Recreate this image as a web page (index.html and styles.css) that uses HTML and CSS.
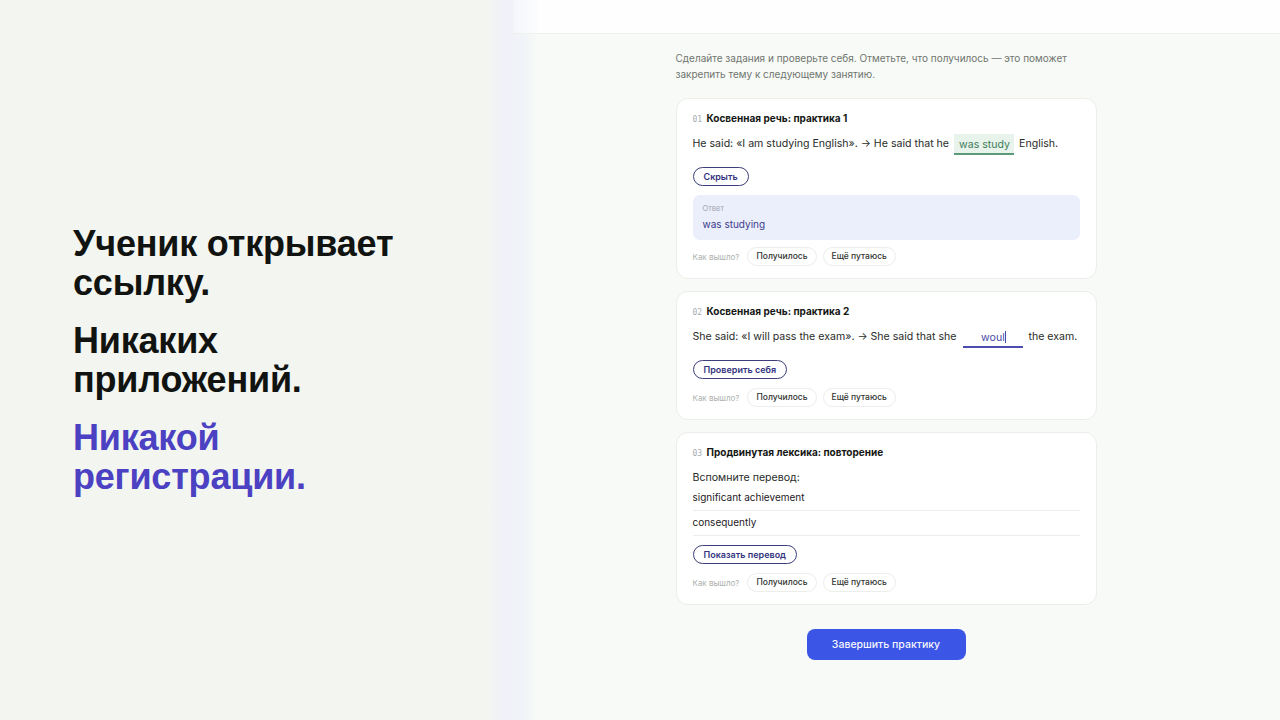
FILE: index.html
```html
<!DOCTYPE html>
<html lang="ru">
<head>
    <meta charset="UTF-8">
    <meta name="viewport" content="width=device-width, initial-scale=1.0">
    <title>Практика по ссылке</title>
    <link rel="stylesheet" href="styles.css">
</head>
<body>
    <div class="stage">
        <section class="pitch">
            <p class="pitch-line">Ученик открывает ссылку.</p>
            <p class="pitch-line">Никаких приложений.</p>
            <p class="pitch-line accent">Никакой регистрации.</p>
        </section>

        <section class="preview">
            <div class="topbar"></div>

            <div class="column">
                <p class="intro">Сделайте задания и проверьте себя. Отметьте, что получилось — это поможет закрепить тему к следующему занятию.</p>

                <div class="card">
                    <div class="card-title"><span class="num">01</span> Косвенная речь: практика 1</div>
                    <div class="sentence">
                        He said: «I am studying English». → He said that he
                        <span class="blank correct">was study</span>
                        English.
                    </div>
                    <button class="pill-btn">Скрыть</button>
                    <div class="answer">
                        <div class="answer-label">Ответ</div>
                        <div class="answer-text">was studying</div>
                    </div>
                    <div class="feedback">
                        <span class="feedback-q">Как вышло?</span>
                        <button class="chip">Получилось</button>
                        <button class="chip">Ещё путаюсь</button>
                    </div>
                </div>

                <div class="card">
                    <div class="card-title"><span class="num">02</span> Косвенная речь: практика 2</div>
                    <div class="sentence">
                        She said: «I will pass the exam». → She said that she
                        <span class="blank typing">woul<span class="caret"></span></span>
                        the exam.
                    </div>
                    <button class="pill-btn">Проверить себя</button>
                    <div class="feedback">
                        <span class="feedback-q">Как вышло?</span>
                        <button class="chip">Получилось</button>
                        <button class="chip">Ещё путаюсь</button>
                    </div>
                </div>

                <div class="card">
                    <div class="card-title"><span class="num">03</span> Продвинутая лексика: повторение</div>
                    <div class="prompt">Вспомните перевод:</div>
                    <div class="word">significant achievement</div>
                    <div class="word">consequently</div>
                    <button class="pill-btn">Показать перевод</button>
                    <div class="feedback">
                        <span class="feedback-q">Как вышло?</span>
                        <button class="chip">Получилось</button>
                        <button class="chip">Ещё путаюсь</button>
                    </div>
                </div>

                <div class="finish-row">
                    <button class="finish">Завершить практику</button>
                </div>
            </div>
        </section>
    </div>
</body>
</html>
```

FILE: styles.css
```css
body {
    margin: 0;
    padding: 0;
    font-family: Inter, "Noto Sans", sans-serif;
    background-color: #f2f5f0;
}

.stage {
    display: flex;
    height: 720px;
    overflow: hidden;
}

/* left side: the big statement */
.pitch {
    width: 417px;
    padding-left: 73px;
    display: flex;
    flex-direction: column;
    justify-content: center;
    gap: 19px;
    background-color: #f2f5f0;
}

.pitch-line {
    margin: 0;
    width: 345px;
    font-family: "Liberation Sans", Arial, sans-serif;
    font-weight: bold;
    font-size: 36px;
    line-height: 39px;
    letter-spacing: -0.2px;
    color: #111311;
}

.pitch-line.accent {
    color: #4b41c2;
}

/* right side: the student's page */
.preview {
    flex: 1;
    background: linear-gradient(90deg, #f2f4f2 0, #f1f1f8 12px, #f0f3f8 30px, #f7faf6 48px);
}

.topbar {
    height: 33px;
    margin-left: 24px;
    background: linear-gradient(90deg, #f4f6fb 0, #fdfefd 26px);
    border-bottom: 1px solid #eef1ec;
}

.column {
    width: 421px;
    margin: 0 auto;
    padding-top: 16px;
    padding-left: 2px;
}

.intro {
    margin: 0 0 16px;
    font-size: 10px;
    line-height: 16px;
    color: #70756f;
}

.card {
    background-color: #fefffe;
    border: 1px solid #eceee9;
    border-radius: 12px;
    padding: 12px 16px 12px;
    margin-bottom: 12px;
    display: flex;
    flex-direction: column;
    align-items: flex-start;
}

.card-title {
    font-size: 10px;
    font-weight: 700;
    color: #141614;
    line-height: 14px;
    margin-bottom: 6px;
}

.num {
    font-family: "DejaVu Sans Mono", monospace;
    font-weight: normal;
    font-size: 8px;
    color: #a9adb3;
    margin-right: 2px;
}

.sentence {
    font-size: 10.6px;
    line-height: 22px;
    color: #2a2c2a;
    white-space: nowrap;
    margin-bottom: 12px;
}

.blank {
    display: inline-block;
    width: 60px;
    height: 21px;
    line-height: 21px;
    text-align: center;
    box-sizing: border-box;
    margin: 0 2px;
    overflow: hidden;
    white-space: nowrap;
    vertical-align: middle;
}

.blank.correct {
    background-color: #e7f3eb;
    color: #3f7c5c;
    border-bottom: 2px solid #5c9b7a;
    text-align: left;
    padding-left: 5px;
}

.blank.typing {
    color: #4b4aa8;
    border-bottom: 2px solid #4d4cb0;
    margin-left: 4px;
}

.caret {
    display: inline-block;
    width: 1px;
    height: 12px;
    background-color: #4b4aa8;
    vertical-align: -2px;
}

.pill-btn {
    font-family: inherit;
    font-size: 9px;
    font-weight: 600;
    color: #34347e;
    background-color: #fefffe;
    border: 1px solid #3e3e7c;
    border-radius: 10px;
    padding: 3px 10px;
    line-height: 11px;
    margin-bottom: 9px;
    cursor: pointer;
}

.answer {
    align-self: stretch;
    background-color: #ebeefb;
    border-radius: 7px;
    padding: 8px 10px 9px;
    margin-bottom: 7px;
}

.answer-label {
    font-size: 7.5px;
    color: #a2a5b3;
    line-height: 11px;
    margin-bottom: 3px;
}

.answer-text {
    font-size: 10px;
    color: #3c3c8c;
    line-height: 14px;
}

.feedback {
    display: flex;
    align-items: center;
    gap: 6px;
}

.feedback-q {
    font-size: 8px;
    color: #aeb2ae;
    margin-right: 2px;
}

.chip {
    font-family: inherit;
    font-size: 8.5px;
    font-weight: 500;
    color: #333533;
    background-color: #fefffe;
    border: 1px solid #eceeea;
    border-radius: 10px;
    padding: 3px 8px;
    line-height: 11px;
}

.prompt {
    font-size: 10.6px;
    color: #2a2c2a;
    line-height: 22px;
    margin-bottom: 1px;
}

.word {
    align-self: stretch;
    font-size: 10px;
    color: #1e201e;
    line-height: 14px;
    padding-bottom: 6px;
    margin-bottom: 4px;
    border-bottom: 1px solid #eceeea;
}

.word + .pill-btn {
    margin-top: 5px;
}

.finish-row {
    display: flex;
    justify-content: center;
    padding-top: 12px;
}

.finish {
    font-family: inherit;
    font-size: 10.5px;
    font-weight: 500;
    color: #f4f6ff;
    background-color: #3b55e6;
    border: none;
    border-radius: 8px;
    width: 159px;
    height: 31px;
    cursor: pointer;
}
```
